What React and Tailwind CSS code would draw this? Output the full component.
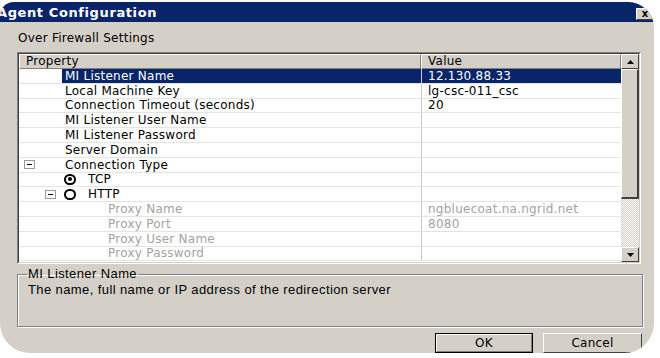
import React from 'react';

const rows = [
  { label: 'MI Listener Name', value: '12.130.88.33', selected: true },
  { label: 'Local Machine Key', value: 'lg-csc-011_csc' },
  { label: 'Connection Timeout (seconds)', value: '20' },
  { label: 'MI Listener User Name', value: '' },
  { label: 'MI Listener Password', value: '' },
  { label: 'Server Domain', value: '' },
  { label: 'Connection Type', value: '', kind: 'group' },
  { label: 'TCP', value: '', kind: 'radioOn' },
  { label: 'HTTP', value: '', kind: 'radioOff' },
  { label: 'Proxy Name', value: 'ngbluecoat.na.ngrid.net', kind: 'proxy' },
  { label: 'Proxy Port', value: '8080', kind: 'proxy' },
  { label: 'Proxy User Name', value: '', kind: 'proxy' },
  { label: 'Proxy Password', value: '', kind: 'proxy' },
];

function MinusBox() {
  return (
    <span className="w-[11px] h-[9px] border border-[#9a9a9a] bg-white flex items-center justify-center">
      <span className="w-[5px] h-px bg-black" />
    </span>
  );
}

function Radio({ on }) {
  return (
    <span className="w-[12px] h-[11px] rounded-full border-2 border-black flex items-center justify-center">
      {on && <span className="w-[4px] h-[4px] rounded-full bg-black" />}
    </span>
  );
}

function PropertyCell({ row }) {
  if (row.kind === 'group') {
    return (
      <div className="flex items-center h-full">
        <span className="ml-[5px]"><MinusBox /></span>
        <span className="ml-[30px]">{row.label}</span>
      </div>
    );
  }
  if (row.kind === 'radioOn') {
    return (
      <div className="flex items-center h-full">
        <span className="ml-[45px]"><Radio on /></span>
        <span className="ml-[12px]">{row.label}</span>
      </div>
    );
  }
  if (row.kind === 'radioOff') {
    return (
      <div className="flex items-center h-full">
        <span className="ml-[26px]"><MinusBox /></span>
        <span className="ml-[8px]"><Radio /></span>
        <span className="ml-[12px]">{row.label}</span>
      </div>
    );
  }
  if (row.kind === 'proxy') {
    return (
      <div className="flex items-center h-full text-[#a3a3a3]">
        <span className="ml-[89px]">{row.label}</span>
      </div>
    );
  }
  return (
    <div className="flex items-center h-full">
      <span
        className={
          row.selected
            ? 'ml-[43px] h-full flex-1 flex items-center pl-[3px] bg-[#0a246a] text-white'
            : 'ml-[46px]'
        }
      >
        {row.label}
      </span>
    </div>
  );
}

export default function App() {
  return (
    <div className="w-[660px] h-[358px] bg-white font-['DejaVu_Sans',sans-serif] text-[12px] tracking-[0.25px] text-black pt-[2px]">
      <div className="w-[654px] h-[351px] bg-[#d4d0c8] overflow-hidden rounded-tl-[14px] rounded-tr-[26px] rounded-bl-[30px] rounded-br-[30px] flex flex-col">
        {/* Title bar */}
        <div className="h-[20px] bg-[#0a246a] flex items-center justify-between shrink-0">
          <span className="-ml-[3px] text-white font-bold text-[13px] tracking-[0.6px] leading-none">Agent Configuration</span>
          <span className="mt-[4px] w-[18px] h-[12px] bg-[#d4d0c8] border-t border-l border-white border-r border-b border-r-[#404040] border-b-[#404040] flex items-center justify-center text-[10px] font-bold leading-none tracking-normal">
            x
          </span>
        </div>

        <div className="px-[17px]">
          <div className="mt-[9px] h-[14px] leading-[14px] pl-px">Over Firewall Settings</div>

          {/* Property grid */}
          <div className="mt-[7px] w-[624px] h-[212px] border-t border-l border-[#808080] border-r border-b border-r-white border-b-white">
            <div className="w-full h-full border-t border-l border-[#404040] border-r border-b border-r-[#d4d0c8] border-b-[#d4d0c8] bg-white flex">
              <div className="flex-1 flex flex-col">
                <div className="h-[15px] flex shrink-0 bg-[#d4d0c8]">
                  <div className="w-[402px] border-t border-l border-white border-r border-b border-r-[#808080] border-b-[#808080] pl-[6px] leading-[13px]">
                    Property
                  </div>
                  <div className="flex-1 border-t border-l border-white border-r border-b border-r-[#808080] border-b-[#808080] pl-[6px] leading-[13px]">
                    Value
                  </div>
                </div>
                {rows.map((row) => (
                  <div key={row.label} className="h-[14.8px] flex border-b border-[#e4e4e4] leading-none shrink-0">
                    <div className="w-[402px]">
                      <PropertyCell row={row} />
                    </div>
                    <div
                      className={
                        'flex-1 border-l border-[#c8c8c8] pl-[6px] flex items-center ' +
                        (row.selected ? 'bg-[#0a246a] text-white' : row.kind === 'proxy' ? 'text-[#a3a3a3]' : '')
                      }
                    >
                      {row.value}
                    </div>
                  </div>
                ))}
              </div>

              {/* Scrollbar */}
              <div className="w-[18px] flex flex-col bg-[#d4d0c8]">
                <div className="h-[15px] border-t border-l border-white border-r border-b border-r-[#404040] border-b-[#404040] flex items-center justify-center">
                  <svg width="7" height="4" viewBox="0 0 7 4"><path d="M3.5 0 L7 4 L0 4 Z" fill="#000" /></svg>
                </div>
                <div className="h-[130px] border-t border-l border-white border-r-2 border-b-2 border-r-[#404040] border-b-[#404040]" />
                <div className="flex-1 bg-[repeating-conic-gradient(#d4d0c8_0_25%,#ffffff_0_50%)] bg-[length:2px_2px]" />
                <div className="h-[15px] border-t border-l border-white border-r border-b border-r-[#404040] border-b-[#404040] flex items-center justify-center">
                  <svg width="7" height="4" viewBox="0 0 7 4"><path d="M0 0 L7 0 L3.5 4 Z" fill="#000" /></svg>
                </div>
              </div>
            </div>
          </div>

          {/* Description group */}
          <fieldset className="mt-[3px] w-[626px] h-[60px] border border-[#808080] shadow-[inset_1px_1px_0_#fff,1px_1px_0_#fff] px-[10px] pt-0 font-['Liberation_Sans',sans-serif] text-[13px] tracking-[0.4px]">
            <legend className="px-px -ml-[1px] leading-[14px]">MI Listener Name</legend>
            <div className="mt-[2px] leading-[14px]">The name, full name or IP address of the redirection server</div>
          </fieldset>

          {/* Buttons */}
          <div className="mt-[6px] flex justify-end gap-[10px] -mr-[5px]">
            <button className="w-[98px] h-[20px] border border-black bg-[#d4d0c8]">
              <div className="h-full border-t border-l border-white border-r border-b border-r-[#808080] border-b-[#808080] flex items-center justify-center">
                OK
              </div>
            </button>
            <button className="w-[99px] h-[20px] border-t border-l border-white border-r border-b border-r-[#404040] border-b-[#404040] bg-[#d4d0c8] flex items-center justify-center">
              Cancel
            </button>
          </div>
        </div>
      </div>
    </div>
  );
}
